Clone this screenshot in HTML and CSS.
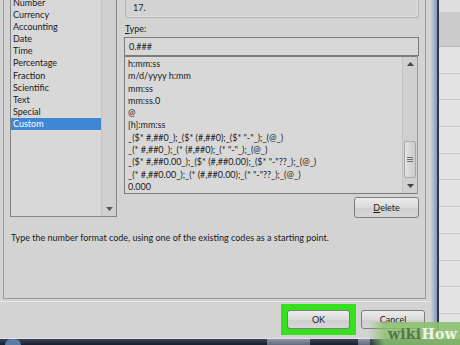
FILE: index.html
```html
<!DOCTYPE html>
<html>
<head>
<meta charset="utf-8">
<link rel="stylesheet" href="styles.css">
</head>
<body>
<div class="screen">
  <div class="main">
    <div class="dialog">
      <div class="panel">
        <div class="panel-body">
          <div class="cat-list">
            <div class="cat-items">
              <ul class="cat-ul">
                <li>Number</li>
                <li>Currency</li>
                <li>Accounting</li>
                <li>Date</li>
                <li>Time</li>
                <li>Percentage</li>
                <li>Fraction</li>
                <li>Scientific</li>
                <li>Text</li>
                <li>Special</li>
                <li class="selected">Custom</li>
              </ul>
            </div>
            <div class="vscroll cat-scroll">
              <div class="track"></div>
              <div class="arrow"><svg width="7" height="4" viewBox="0 0 7 4"><path d="M0 0h7L3.5 4z" fill="#555"/></svg></div>
            </div>
          </div>
          <div class="right-col">
            <div class="sample">17.</div>
            <div class="type-label"><u>T</u>ype:</div>
            <div class="type-input">0.###</div>
            <div class="fmt-list">
              <ul class="fmt-ul">
                <li>h:mm:ss</li>
                <li>m/d/yyyy h:mm</li>
                <li>mm:ss</li>
                <li>mm:ss.0</li>
                <li>@</li>
                <li>[h]:mm:ss</li>
                <li>_($* #,##0_);_($* (#,##0);_($* "-"_);_(@_)</li>
                <li>_(* #,##0_);_(* (#,##0);_(* "-"_);_(@_)</li>
                <li>_($* #,##0.00_);_($* (#,##0.00);_($* "-"??_);_(@_)</li>
                <li>_(* #,##0.00_);_(* (#,##0.00);_(* "-"??_);_(@_)</li>
                <li>0.000</li>
              </ul>
              <div class="vscroll fmt-scroll">
                <div class="arrow"><svg width="7" height="4" viewBox="0 0 7 4"><path d="M0 4h7L3.5 0z" fill="#444"/></svg></div>
                <div class="track thumb-track">
                  <div class="thumb"><span></span><span></span><span></span></div>
                </div>
                <div class="arrow"><svg width="7" height="4" viewBox="0 0 7 4"><path d="M0 0h7L3.5 4z" fill="#444"/></svg></div>
              </div>
            </div>
            <div class="delete-row">
              <div class="btn delete-btn"><u>D</u>elete</div>
            </div>
          </div>
        </div>
        <p class="help">Type the number format code, using one of the existing codes as a starting point.</p>
      </div>
      <div class="buttons">
        <div class="ok-ring"><div class="btn ok-btn">OK</div></div>
        <div class="btn cancel-btn">Cancel</div>
      </div>
    </div>
    <div class="frame"></div>
    <div class="sheet">
      <div class="sheet-top"></div>
      <div class="sheet-head"></div>
      <div class="sheet-rows"></div>
    </div>
  </div>
  <div class="taskbar">
    <div class="orb"></div>
    <div class="task task-a"></div>
    <div class="task task-b"></div>
  </div>
  <div class="watermark"><span class="wm-wiki">wiki</span><span class="wm-how">How</span></div>
</div>
</body>
</html>
```

FILE: styles.css
```css
* { box-sizing: border-box; }
html, body { margin: 0; padding: 0; }
body {
  width: 460px;
  height: 345px;
  overflow: hidden;
  font-family: Lato, "Open Sans", sans-serif;
  font-size: 9px;
  color: #1a1a1a;
  background: #d3d3d3;
}
ul { list-style: none; margin: 0; padding: 0; }

.screen {
  position: relative;
  width: 460px;
  height: 345px;
  display: flex;
  flex-direction: column;
}
.main {
  display: flex;
  height: 339px;
}
.dialog {
  width: 431px;
  background: #d3d3d3;
  display: flex;
  flex-direction: column;
  border-bottom: 1px solid #e3e3e3;
}
.panel {
  margin-left: 3px;
  width: 423px;
  height: 299px;
  border: 1px solid #9a9a9a;
  border-top: none;
  padding-left: 6px;
  display: flex;
  flex-direction: column;
}
.panel-body {
  display: flex;
}

/* category list */
.cat-list {
  width: 107px;
  height: 217px;
  border: 1px solid #858585;
  border-top: none;
  background: #d8d8d8;
  display: flex;
}
.cat-items {
  flex: 1;
  overflow: hidden;
}
.cat-ul {
  margin-top: -3px;
}
.cat-ul li {
  height: 12.1px;
  line-height: 12.1px;
  padding-left: 2px;
  white-space: nowrap;
}
.cat-ul li.selected {
  background: #3f86d4;
  color: #fff;
}
.vscroll {
  width: 15px;
  display: flex;
  flex-direction: column;
  background: #d0d0d0;
  border-left: 1px solid #c4c4c4;
}
.vscroll .track { flex: 1; }
.vscroll .arrow {
  height: 15px;
  display: flex;
  align-items: center;
  justify-content: center;
}

/* right column */
.right-col {
  margin-left: 7px;
  width: 295px;
  display: flex;
  flex-direction: column;
}
.sample {
  margin-left: 1px;
  height: 18px;
  border: 1px solid #b3b3b3;
  border-top: none;
  border-radius: 0 0 3px 3px;
  box-shadow: inset -1px -1px 0 #e2e2e2;
  padding-left: 7px;
  line-height: 16px;
}
.type-label {
  margin-top: 5px;
  height: 14px;
  line-height: 12px;
  padding-left: 1px;
}
.type-input {
  height: 19px;
  border: 1px solid #7c7c7c;
  background: #d8d8d8;
  padding-left: 4px;
  line-height: 17px;
}
.fmt-list {
  height: 138px;
  border: 1px solid #7c7c7c;
  border-right-color: #9a9a9a;
  background: #d8d8d8;
  display: flex;
  margin-right: 1px;
}
.fmt-ul {
  flex: 1;
  padding-top: 1px;
  padding-left: 3px;
  overflow: hidden;
}
.fmt-ul li {
  height: 12.3px;
  line-height: 12.3px;
  white-space: nowrap;
}
.fmt-scroll .arrow { height: 14px; }
.thumb-track {
  display: flex;
  flex-direction: column;
  justify-content: flex-end;
  padding-bottom: 1px;
}
.thumb {
  height: 37px;
  margin: 0 1px;
  border: 1px solid #a8a8a8;
  border-radius: 2px;
  background: linear-gradient(to right, #e2e2e2, #cdcdcd);
  display: flex;
  flex-direction: column;
  align-items: center;
  justify-content: center;
  gap: 1px;
}
.thumb span {
  width: 6px;
  height: 1px;
  background: #6e6e6e;
}

.btn {
  display: flex;
  align-items: center;
  justify-content: center;
  height: 20px;
  border: 1px solid #7d7d7d;
  border-radius: 3px;
  background: linear-gradient(#ececec, #dadada 50%, #cfcfcf 51%, #d6d6d6);
  color: #1c1c1c;
}
.delete-row {
  display: flex;
  justify-content: flex-end;
  margin-top: 3px;
}
.delete-btn {
  width: 65px;
  height: 21px;
}

.help {
  margin: 14px 0 0 1px;
  line-height: 12px;
  white-space: nowrap;
}

/* bottom buttons */
.buttons {
  display: flex;
  justify-content: flex-end;
  align-items: flex-start;
  padding: 2px 6px 0 0;
  border-top: 1px solid #e6e6e6;
  margin-top: 2px;
}
.ok-ring {
  width: 75px;
  height: 31px;
  padding: 6px;
  background: #34e11c;
}
.ok-btn {
  width: 63px;
  height: 19px;
}
.cancel-btn {
  margin-left: 5px;
  margin-top: 6px;
  width: 64px;
  height: 19px;
}

/* window frame and sheet */
.frame {
  width: 8px;
  background: linear-gradient(to right, #c9cfdc, #a6b1cb 40%, #8c99b8 70%, #3a404c 76%, #2b2f38);
}
.sheet {
  flex: 1;
  display: flex;
  flex-direction: column;
  background: #e2e2e2;
}
.sheet-top { height: 12px; background: #dedede; }
.sheet-head {
  height: 35px;
  background: #cbcbcb;
  border-bottom: 1px solid #b8b8b8;
}
.sheet-rows {
  flex: 1;
  background: repeating-linear-gradient(#e3e3e3 0, #e3e3e3 25.7px, #c9c9c9 25.7px, #c9c9c9 26.7px);
}

.taskbar {
  height: 6px;
  background: linear-gradient(#39445a, #18202e);
  display: flex;
}
.orb {
  width: 16px;
  height: 6px;
  margin-left: 5px;
  background: #5d7aa4;
  border-radius: 8px 8px 0 0;
}
.task {
  height: 6px;
  background: linear-gradient(#8d97a8, #606a7c);
}
.task-a { margin-left: 246px; width: 43px; }
.task-b { margin-left: 48px; width: 12px; }

.watermark {
  position: absolute;
  right: 0;
  bottom: 0;
  width: 92px;
  height: 23px;
  padding: 3px 3px 0 0;
  text-align: right;
  background: linear-gradient(to right, rgba(150, 200, 120, 0), rgba(140, 192, 112, 0.85) 18%, rgba(140, 192, 112, 0.9));
  font-family: "DejaVu Serif", serif;
  font-weight: bold;
  font-size: 14px;
  line-height: 19px;
  letter-spacing: 0.3px;
}
.wm-wiki { color: #56764a; }
.wm-how { color: #eef5e8; }
```
